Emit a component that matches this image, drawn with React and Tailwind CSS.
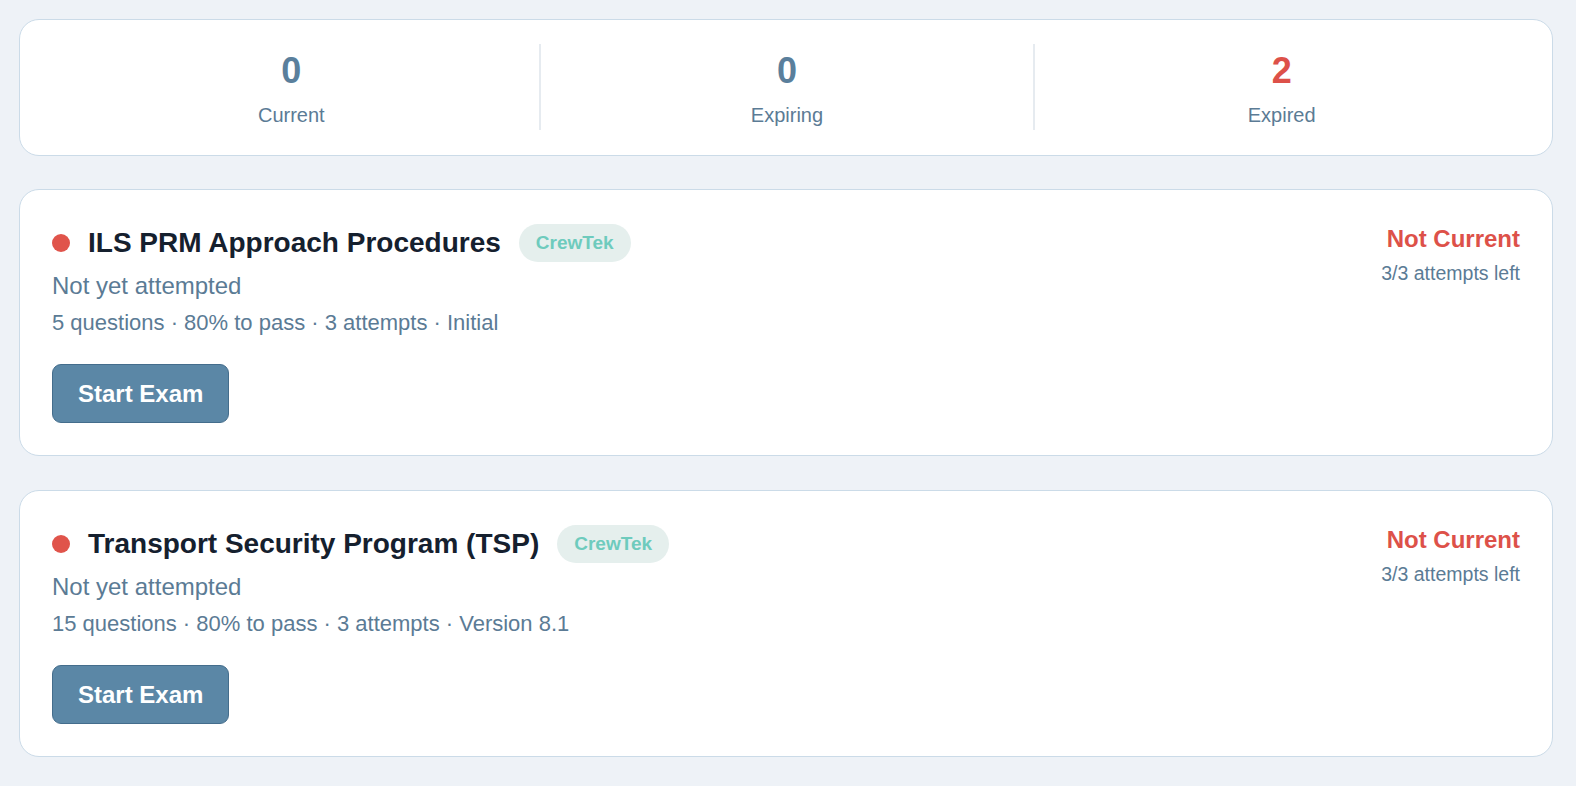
import React from 'react'

const stats = [
  { label: 'Current', value: 0, tone: 'text-[#5a7f9c]' },
  { label: 'Expiring', value: 0, tone: 'text-[#5a7f9c]' },
  { label: 'Expired', value: 2, tone: 'text-[#dd5149]' },
]

const exams = [
  {
    id: 'ils-prm',
    title: 'ILS PRM Approach Procedures',
    provider: 'CrewTek',
    meta: ['5 questions', '80% to pass', '3 attempts', 'Initial'],
    left: '3/3 attempts left',
  },
  {
    id: 'tsp',
    title: 'Transport Security Program (TSP)',
    provider: 'CrewTek',
    meta: ['15 questions', '80% to pass', '3 attempts', 'Version 8.1'],
    left: '3/3 attempts left',
  },
]

function ExamCard({ exam }) {
  return (
    <div className="bg-white border border-[#cbdbe8] rounded-[20px] px-8 pt-[34px] pb-8 flex justify-between items-start">
      <div className="flex flex-col items-start">
        <div className="flex items-center gap-[18px]">
          <span className="w-[18px] h-[18px] rounded-full bg-[#e0544b]" />
          <h2 className="text-[28px] leading-[34px] font-bold text-[#15202e]">{exam.title}</h2>
          <span className="rounded-full bg-[#e5efed] text-[#6ecbbd] font-bold text-[19px] leading-[26px] py-[6px] px-[17px]">
            {exam.provider}
          </span>
        </div>
        <p className="mt-[9px] text-[24px] leading-[29px] text-[#5b7b95]">Not yet attempted</p>
        <p className="mt-[10px] text-[22px] leading-[26px] text-[#5b7b95]">{exam.meta.join(' · ')}</p>
        <button className="mt-[28px] bg-[#5b87a6] border border-[#446d8c] rounded-[9px] px-[25px] pt-[15px] pb-[14px] text-white font-bold text-[24px] leading-[28px]">
          Start Exam
        </button>
      </div>
      <div className="flex flex-col items-end">
        <span className="text-[24px] leading-[29px] font-bold text-[#dd5149]">Not Current</span>
        <span className="mt-[8px] text-[19.5px] leading-[24px] text-[#5b7b95]">{exam.left}</span>
      </div>
    </div>
  )
}

export default function App() {
  return (
    <main className="min-h-screen bg-[#eef2f7] pl-[19px] pr-[23px] pt-[19px] pb-8 font-['Liberation_Sans',Arial,sans-serif]">
      {/* Summary */}
      <div className="bg-white border border-[#cbdbe8] rounded-[20px] px-6 pt-6 pb-[25px] grid grid-cols-3">
        {stats.map((s, i) => (
          <div
            key={s.label}
            className={`flex flex-col items-center pt-[7px] pb-[3px] ${i > 0 ? 'border-l-2 border-[#e6ebf0]' : ''}`}
          >
            <span className={`text-[36px] leading-[40px] font-bold ${s.tone}`}>{s.value}</span>
            <span className="mt-[12px] text-[20px] leading-[24px] text-[#5b7b95]">{s.label}</span>
          </div>
        ))}
      </div>

      {/* Exams */}
      <div className="mt-[33px] flex flex-col gap-[34px]">
        {exams.map((exam) => (
          <ExamCard key={exam.id} exam={exam} />
        ))}
      </div>
    </main>
  )
}
